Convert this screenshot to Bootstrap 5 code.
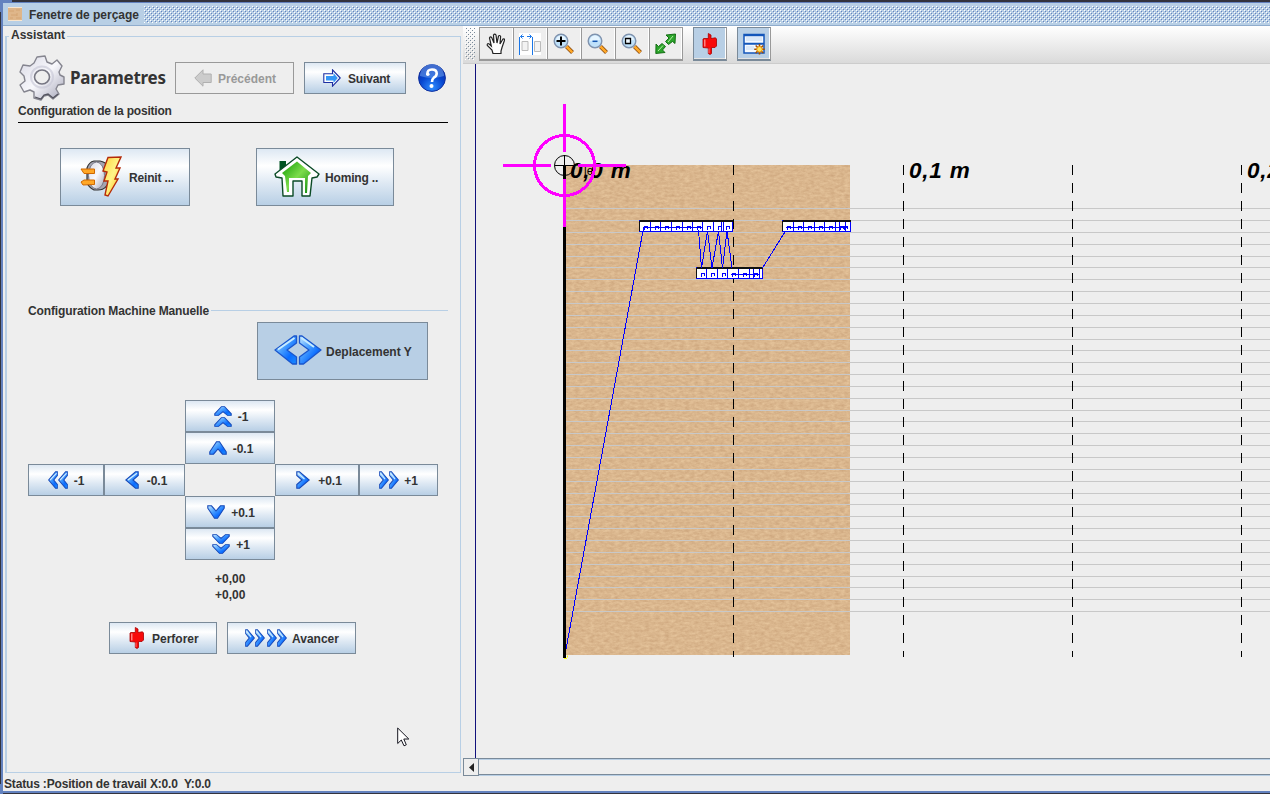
<!DOCTYPE html>
<html lang="fr">
<head>
<meta charset="utf-8">
<title>Fenetre de perçage</title>
<link href="https://cdn.jsdelivr.net/npm/bootstrap@5.3.0/dist/css/bootstrap.min.css" rel="stylesheet">
<style>
body{font:bold 12px/14px "Liberation Sans",sans-serif;color:#333;background:#eee;width:1270px;height:794px;overflow:hidden}
.frame{height:794px;border-top:2px solid #33333d;border-bottom:1px solid #33333d;border-left:1px solid #33333d}
.inner-frame{border-left:2px solid #6382bf;border-top:1px solid #6382bf;border-bottom:2px solid #6382bf;background:#eee}
.titlebar{height:23px;background:#b8cfe5;border-bottom:1px solid #8faccd;padding-left:5px}
.bumps{height:17px;margin-left:5px}
.tool-head{height:38px;background:linear-gradient(#fff,#ddd 92%,#dadada);border-bottom:1px solid #ccc;padding:1px 0 0 2px}
.left-pane{width:460px}
.group-box{border:1px solid #b8cfe5;border-left-width:2px;margin:10px 2px 3px 2px;height:737px}
.group-name{margin-top:-9px;padding:0 2px;margin-left:2px;background:#eee;width:max-content}
.snug{letter-spacing:-.17px}
.jbtn{border:1px solid #7a8a99;border-radius:0;background:linear-gradient(#dde8f3 0%,#fff 30%,#dde8f3 62%,#b8cfe5 100%);font:bold 12px/14px "Liberation Sans",sans-serif;color:#333;padding:2px 0 0}
.jbtn>svg{margin-top:-2px}
.jbtn:disabled{background:#eee;border-color:#999;color:#999;opacity:1}
.jbtn.pressed{background:#b8cfe5}
.tbtn{width:34px;height:34px;border:1px solid #999;border-width:1px 0 2px 1px;box-shadow:inset -1px 0 #fff,inset 0 -1px #e4e4e4;background:#eee;border-radius:0;padding:0 1px 0 0}
.tbtn.on{background:#b8cfe5;border-color:#7a8a99}
.tbtn:last-child{border-right:1px solid #999}
.heading{font:bold 17px/22px "Noto Sans","Open Sans",sans-serif;letter-spacing:-.25px}
.pad-grid{display:grid;grid-template-columns:76px 81px 90px 84px 79px;grid-auto-rows:32px;margin:20px 0 0 21px}
.canvas-pane{border-left:1px solid #11117c;margin-left:12px}
.scroll-row{height:18px;border-top:1px solid #7a8a99}
.scroll-arrow{width:16px;border:1px solid #7a8a99;border-top:0;background:#eee}
.scroll-track{border-top:1px solid #b8cfe5;border-bottom:1px solid #7a8a99;height:16px;box-shadow:0 1px #b8cfe5}
.pointer{left:397px;top:727px}
.corner{left:0;top:0;width:12px;height:3px;background:#6382bf}
.corner.side{width:3px;height:12px}
.corner.low{top:784px;width:3px;height:10px}
svg{display:block;flex:none}
</style>
</head>
<body>
<svg width="0" height="0" class="position-absolute">
<defs>
<linearGradient id="blueG" x1="0" y1="0" x2="1" y2="1"><stop offset="0" stop-color="#c4e8ff"/><stop offset=".4" stop-color="#4aa0ff"/><stop offset=".7" stop-color="#0a6cff"/><stop offset="1" stop-color="#1c8cff"/></linearGradient>
<linearGradient id="greyG" x1="0" y1="0" x2="1" y2="1"><stop offset="0" stop-color="#d8d8e4"/><stop offset=".5" stop-color="#f8f8fc"/><stop offset="1" stop-color="#a5a5b8"/></linearGradient>
<linearGradient id="yel" x1="0" y1="0" x2="1" y2="1"><stop offset="0" stop-color="#ffd23c"/><stop offset=".5" stop-color="#fff58a"/><stop offset="1" stop-color="#ffb300"/></linearGradient>
<linearGradient id="grn" x1="0" y1="0" x2="1" y2="1"><stop offset="0" stop-color="#0d9a00"/><stop offset=".5" stop-color="#7ddc4b"/><stop offset="1" stop-color="#0d8a0d"/></linearGradient>
<radialGradient id="helpG" cx=".5" cy=".85" r=".8"><stop offset="0" stop-color="#2e8dff"/><stop offset=".55" stop-color="#0747d0"/><stop offset="1" stop-color="#0a2ca8"/></radialGradient>
<symbol id="chevR" viewBox="0 0 14 18" preserveAspectRatio="none"><path d="M.8.8 3.5.8 13.2 9 3.5 17.2.8 17.2.8 13.5 6 9 .8 4.500Z" fill="url(#blueG)" stroke="#1749b8" stroke-width="1.1"/><path d="M2 2.2 8.5 8" stroke="#d5efff" stroke-width="1.2"/></symbol>
<symbol id="chevL" viewBox="0 0 14 18" preserveAspectRatio="none"><path d="M13.2.8 10.5.8.8 9 10.5 17.2 13.2 17.2 13.2 13.5 8 9 13.2 4.500Z" fill="url(#blueG)" stroke="#1749b8" stroke-width="1.1"/><path d="M12 2.2 3 9" stroke="#d5efff" stroke-width="1.2"/></symbol>
<symbol id="chevU" viewBox="0 0 18 14" preserveAspectRatio="none"><path d="M.8 13.2.8 10.8 7.5.8 10.5.8 17.2 10.8 17.2 13.2 13.5 13.2 9 8 4.5 13.2Z" fill="url(#blueG)" stroke="#1749b8" stroke-width="1.1"/></symbol>
<symbol id="chevD" viewBox="0 0 18 14" preserveAspectRatio="none"><path d="M.8.8 4.5.8 9 6 13.5.8 17.2.8 17.2 3.2 10.5 13.2 7.5 13.2.8 3.2Z" fill="url(#blueG)" stroke="#1749b8" stroke-width="1.1"/></symbol>
<symbol id="punch" viewBox="0 0 16 22"><path d="M6.300.5 9 2V5.500L13.500 4.800 14.500 6V13L13 14.500H9.500V20.500L8 21.500 6.300 20.500V15L1 14.500V6L2 5.500H6.300Z" fill="#f80a0a" stroke="#a80000" stroke-width=".8"/><path d="M2 6.500H3.500V13.500H2Z" fill="#ff8080"/><path d="M7 15.500V20" stroke="#ff7070"/></symbol>
<symbol id="loupe" viewBox="0 0 22 22"><path d="M13.5 13.5 19.5 19.5" stroke="#8a4a10" stroke-width="4"/><path d="M13.5 13.5 19.3 19.3" stroke="#ffa928" stroke-width="2.5"/><circle cx="8" cy="8" r="6.8" fill="#bfe1fa" stroke="#8093ae" stroke-width="1.4"/><path d="M3 8A5 5 0 0 1 13 7" fill="#e6f5ff"/></symbol>
<pattern id="titleBumps" width="4" height="4" patternUnits="userSpaceOnUse"><path d="M0 0h1v1H0zM2 2h1v1H2z" fill="#fff"/><path d="M1 1h1v1H1zM3 3h1v1H3z" fill="#6382bf"/></pattern>
<pattern id="gripBumps" width="4" height="4" patternUnits="userSpaceOnUse"><path d="M0 0h1v1H0zM2 2h1v1H2z" fill="#fff"/><path d="M1 1h1v1H1zM3 3h1v1H3z" fill="#7a8a99"/></pattern>
</defs>
</svg>

<div class="frame d-flex flex-column">
<div class="inner-frame d-flex flex-column flex-grow-1">
  <header class="titlebar d-flex align-items-center">
    <svg width="14" height="14"><path fill="#dfb68a" d="M0 0h14v14H0z"/><path d="M0 .5H14M0 13.5H14" stroke="#f8e6d0"/><path d="M1 4H6M8 3H12M3 8H9M9 6v3M2 11H5M8 11H13" stroke="#cc9965" opacity=".6"/></svg>
    <span style="margin-left:7px;padding-top:1px">Fenetre de perçage</span>
    <svg class="bumps flex-grow-1"><rect width="1200" height="17" fill="url(#titleBumps)"/></svg>
  </header>

  <main class="d-flex" style="height:750px">
    <section class="left-pane flex-shrink-0">
      <div class="group-box">
        <div class="group-name">Assistant</div>
        <div class="d-flex align-items-center" style="height:46px;margin:13px 0 0 12px">
          <svg width="46" height="46" viewBox="0 0 46 46"><path d="M18 2 26 1 28 7 33 9 38 5 43 11 40 17 41 20 45 22 45 29 39 30 37 34 40 39 34 44 29 40 25 41 22 45 15 43 15 37 11 35 5 37 1 30 6 26 5 21 1 17 4 10 11 11 15 8Z" fill="url(#greyG)" stroke="#85858f" stroke-width="1.4" stroke-linejoin="round"/><path d="M16 42 22 44 25 40 29 39 34 43 39 39" fill="none" stroke="#555560" stroke-width="1.3"/><ellipse cx="23" cy="22" rx="7.5" ry="7" fill="#eee" stroke="#777783" stroke-width="1.6"/><ellipse cx="23" cy="22" rx="11" ry="10.5" fill="none" stroke="#c4c4d4" stroke-width="2" opacity=".6"/></svg>
          <span class="heading" style="width:105px;margin-left:5px">Parametres</span>
          <button class="btn jbtn d-flex align-items-center" disabled style="width:119px;height:32px;padding-left:18px"><svg width="18" height="18" viewBox="0 0 18 18" style="margin-right:6px"><path d="M.8 9 9 .8V5H17.2V13.5H9V17.2Z" fill="#ccc" stroke="#b0b0b0"/></svg>Précédent</button>
          <button class="btn jbtn d-flex align-items-center" style="width:102px;height:32px;margin-left:10px;padding-left:18px"><svg width="18" height="18" viewBox="0 0 18 18" style="margin-right:7px"><path d="M17.2 9 9.5.8V4.8H.8V13.5H9.5V17.2Z" fill="#fff" stroke="#1e2fa2" stroke-width="1.1"/><path d="M14.8 9 10.500 4V7H3V11.5H10.500V14Z" fill="#3597f5"/></svg><span class="snug">Suivant</span></button>
          <svg width="28" height="28" viewBox="0 0 28 28" style="margin-left:12px"><circle cx="14" cy="14" r="13.4" fill="url(#helpG)" stroke="#12309d"/><path d="M2 12A12 12 0 0 1 26 12Q14 16 2 12Z" fill="#6ea2ef" opacity=".55"/><path d="M9.5 10Q9 5.5 14 5.5Q18.7 5.5 18.7 9.5Q18.7 12 15.8 13.7Q14 15 14 18" fill="none" stroke="#fff" stroke-width="2.6"/><circle cx="9.8" cy="10.2" r="1.8" fill="#fff"/><circle cx="13.5" cy="22" r="2" fill="#fff"/></svg>
        </div>
        <div style="margin:3px 12px 0 11px;border-bottom:1px solid #000;height:19px"><span style="letter-spacing:-.2px">Configuration de la position</span></div>
        <div class="d-flex" style="margin:25px 0 0 53px;gap:66px">
          <button class="btn jbtn d-flex align-items-center" style="width:130px;height:58px;padding-left:19px"><svg width="42" height="42" viewBox="0 0 42 42" style="margin-right:7px"><path d="M14 5H20Q31 7 30 21Q28 34 18 34H14Q8 31 7 26V12Q9 6 14 5Z" fill="#a4a4b2" stroke="#333" stroke-width="1.2"/><ellipse cx="16.5" cy="19.500" rx="8" ry="13.500" fill="url(#greyG)" stroke="#777785"/><path d="M1 13H14.500V17.500H4ZM1 26 4 24H14.500V28.500L3 29Z" fill="#ffa726" stroke="#d06800"/><path d="M28 1.5 41 1 36 12H40L35 23H38L28 40 25 39 28 25 24 25 27 16 23 15Z" fill="url(#yel)" stroke="#b52b08" stroke-width="1.4"/></svg><span class="snug">Reinit ...</span></button>
          <button class="btn jbtn d-flex align-items-center" style="width:138px;height:58px;padding-left:17px"><svg width="46" height="42" viewBox="0 0 46 42" style="margin-right:5px"><path d="M5.5 5H12V14L5.5 19Z" fill="#005322"/><path d="M23 1 45 18 43 21 38 22 36 40H28V25H19V40H9L8 22 2 21 1 18Z" fill="#fff" stroke="#0b4b26" stroke-width="1.4" stroke-linejoin="round"/><path d="M23 5.5 37 17 34 20 33 37H31V22H15V36H13L11 20 8 17Z" fill="url(#grn)"/></svg><span class="snug">Homing ..</span></button>
        </div>
        <div class="d-flex align-items-center" style="margin:97px 12px 0 21px;height:14px"><span style="letter-spacing:-.12px;padding-top:1px">Configuration Machine Manuelle</span><div class="flex-grow-1" style="height:1px;background:#b8cfe5;margin-left:2px"></div></div>
        <button class="btn jbtn pressed d-flex align-items-center" style="width:171px;height:58px;margin:5px 0 0 250px;padding-left:16px"><svg width="48" height="30" viewBox="0 0 48 30" style="margin:-5px 4px 0 0"><g fill="url(#blueG)" stroke="#1a56cc" stroke-width="1.3" stroke-linejoin="round"><path d="M20 1H22.5V8L13 15 22.5 22V29H18.5L1 15Z"/><path d="M28 1H25.5V8L35 15 25.5 22V29H29.5L47 15Z"/></g><path d="M20.500 3 4 14.500M27.500 3 40 12" stroke="#c6ebff" stroke-width="2"/></svg>Deplacement Y</button>
        <div class="pad-grid">
          <button class="btn jbtn d-flex align-items-center justify-content-center" style="grid-area:1/3"><span style="margin:-2px 0 0 2px"><svg width="18" height="10"><use href="#chevU" width="18" height="10"/></svg><svg width="18" height="10" style="margin-top:1px"><use href="#chevU" width="18" height="10"/></svg></span><span style="margin-left:6px">-1</span></button>
          <button class="btn jbtn d-flex align-items-center justify-content-center" style="grid-area:2/3;padding-left:2px"><svg width="18" height="14"><use href="#chevU"/></svg><span style="margin-left:6px">-0.1</span></button>
          <button class="btn jbtn d-flex align-items-center justify-content-center" style="grid-area:3/1"><svg width="10" height="18"><use href="#chevL" width="10" height="18"/></svg><svg width="10" height="18"><use href="#chevL" width="10" height="18"/></svg><span style="margin-left:6px">-1</span></button>
          <button class="btn jbtn d-flex align-items-center justify-content-center" style="grid-area:3/2;padding-left:3px"><svg width="14" height="18"><use href="#chevL"/></svg><span class="ms-2">-0.1</span></button>
          <button class="btn jbtn d-flex align-items-center justify-content-center" style="grid-area:3/4;padding-left:4px"><svg width="14" height="18"><use href="#chevR"/></svg><span class="ms-2">+0.1</span></button>
          <button class="btn jbtn d-flex align-items-center justify-content-center" style="grid-area:3/5"><svg width="10" height="18"><use href="#chevR" width="10" height="18"/></svg><svg width="10" height="18"><use href="#chevR" width="10" height="18"/></svg><span style="margin-left:5px">+1</span></button>
          <button class="btn jbtn d-flex align-items-center justify-content-center" style="grid-area:4/3;padding-left:2px"><svg width="18" height="14"><use href="#chevD"/></svg><span style="margin-left:6px">+0.1</span></button>
          <button class="btn jbtn d-flex align-items-center justify-content-center" style="grid-area:5/3;padding-left:2px"><span style="margin-top:-2px"><svg width="18" height="10"><use href="#chevD" width="18" height="10"/></svg><svg width="18" height="10"><use href="#chevD" width="18" height="10"/></svg></span><span style="margin-left:6px">+1</span></button>
        </div>
        <div style="margin:11px 0 0 208px;line-height:16px">+0,00<br>+0,00</div>
        <div class="d-flex" style="gap:10px;margin:19px 0 0 102px">
          <button class="btn jbtn d-flex align-items-center" style="width:108px;height:32px;padding-left:19px"><svg width="16" height="22" style="margin-right:7px"><use href="#punch"/></svg>Perforer</button>
          <button class="btn jbtn d-flex align-items-center" style="width:129px;height:32px;padding-left:17px"><svg width="42" height="18" style="margin-right:5px"><use href="#chevR" width="10" height="18"/><use href="#chevR" x="10" width="10" height="18"/><use href="#chevR" x="22" width="10" height="18"/><use href="#chevR" x="32" width="10" height="18"/></svg>Avancer</button>
        </div>
      </div>
    </section>

    <section class="flex-grow-1 d-flex flex-column overflow-hidden">
      <div class="tool-head d-flex">
        <svg width="10" height="33" style="margin-right:4px"><rect width="10" height="33" fill="url(#gripBumps)"/></svg>
        <div class="d-flex">
          <button class="btn tbtn d-flex align-items-center justify-content-center"><svg width="20" height="22" viewBox="0 0 20 22"><path d="M7 20.5 6 17 1.3 12.5Q.8 10 3.2 11L5.3 13 3.5 5Q4.2 3 5.7 4.5L8 10 7.5 2Q8.6.2 10 2L11 10 12.5 3Q14 1.8 14.6 3.5L14 11 17 6Q18.8 5.3 18.4 7.5L16 14.5 15 18V20.5Z" fill="#fff" stroke="#222" stroke-width="1.2"/></svg></button>
          <button class="btn tbtn d-flex align-items-center justify-content-center"><svg width="22" height="22" viewBox="0 0 22 22"><path fill="#fff" d="M0 0h22v22H0z"/><path d="M.5 4V22M13.5 4V22" stroke="#1976e8"/><path d="M1.5 3.5H5M8 3.5H12.5M3.5 1.5 1.5 3.5 3.5 5.5M10.5 1.5 12.5 3.5 10.5 5.5" stroke="#1976e8" fill="none"/><path d="M3 8.5H9V17.5H3ZM15.5 8.5H21.5V18.5H15.5Z" fill="#f3f3f3" stroke="#bbb"/></svg></button>
          <button class="btn tbtn d-flex align-items-center justify-content-center"><svg width="22" height="22"><use href="#loupe"/><path d="M3.5 8H12.5M8 3.5V12.5" stroke="#000" stroke-width="2"/></svg></button>
          <button class="btn tbtn d-flex align-items-center justify-content-center"><svg width="22" height="22"><use href="#loupe"/><path d="M5.5 8.3H10.5" stroke="#1455b0" stroke-width="1.5"/></svg></button>
          <button class="btn tbtn d-flex align-items-center justify-content-center"><svg width="22" height="22"><use href="#loupe"/><path d="M4.5 5.5H9.5V10.5H4.5Z" fill="#eef8ff" stroke="#000" stroke-width="1.3"/></svg></button>
          <button class="btn tbtn d-flex align-items-center justify-content-center"><svg width="22" height="22" viewBox="0 0 22 22"><g fill="#2ca52c" stroke="#0a650a" stroke-width=".9"><path d="M11 2 20.5 1 20 10.5 17.5 8.5 13.5 11.500 10.5 8.5 14 5Z"/><path d="M1 11 3.5 13.5 7 10.500 10.5 13.5 7.5 17 10 19.5.8 20.5Z"/></g><path d="M13 9 18 3M3 18 8 12.5" stroke="#b6f0a0"/></svg></button>
        </div>
        <div class="d-flex" style="margin-left:10px"><button class="btn tbtn on d-flex align-items-center justify-content-center"><svg width="16" height="22"><use href="#punch"/></svg></button></div>
        <div class="d-flex" style="margin-left:10px"><button class="btn tbtn on d-flex align-items-center justify-content-center"><svg width="22" height="22" viewBox="0 0 22 22"><path d="M1 1.5H21V20H1Z" fill="#f4f9ff" stroke="#1457ba" stroke-width="1.5"/><path d="M1 2.3H21M1 10.8H21" stroke="#1457ba" stroke-width="2"/><path d="M3 6H19M3 15H11" stroke="#dce9f8" stroke-width="4"/><path d="M16.5 11V21.5M11.2 16.3H21.8M12.7 12.5 20.2 20M20.2 12.5 12.7 20" stroke="#a05008" stroke-width="1.6"/><circle cx="16.5" cy="16.3" r="2.8" fill="#ffe35c" stroke="#e68a00"/></svg></button></div>
      </div>
      <div class="canvas-pane flex-grow-1">
        <svg width="794" height="694" viewBox="476 64 794 694">
          <defs>
            <filter id="kraft" x="0" y="0" width="100%" height="100%" color-interpolation-filters="sRGB"><feTurbulence type="fractalNoise" baseFrequency=".2 .4" numOctaves="4" seed="8" result="n"/><feColorMatrix values=".12 0 0 0 .795  .15 0 0 0 .64  .15 0 0 0 .48  0 0 0 0 1"/></filter>
          </defs>
          <rect x="565" y="165" width="285" height="490" fill="#d9b68c"/>
          <rect x="565" y="165" width="285" height="490" filter="url(#kraft)"/>
          <g id="tracks" stroke="#c8c8c8"></g>
          <g stroke="#000" stroke-dasharray="10 8"><path d="M733.5 165V657M903.5 165V657M1072.5 165V657M1241.5 165V657"/></g>
          <g id="punches" shape-rendering="crispEdges"></g>
          <path d="M565.5 652 643.5 228M698.5 230 701.5 268 707.5 231 712 268 718.5 231 722.5 268 727 231 732 268M762.5 268 785.5 231" fill="none" stroke="#00f" shape-rendering="crispEdges"/>
          <path d="M564.5 165V658" stroke="#000" stroke-width="3"/>
          <path d="M564 658.5h3M567.5 655.5v2" stroke="#ff0"/>
          <g font-family="Liberation Sans, sans-serif" font-weight="bold" font-style="italic" font-size="22.5" letter-spacing=".8" fill="#000">
            <text x="570" y="178">0,0 m</text><text x="909" y="178">0,1 m</text><text x="1247" y="178">0,2 m</text>
          </g>
          <text x="584" y="175" font-family="Liberation Sans, sans-serif" font-weight="normal" font-size="12" fill="#000">le</text>
          <g stroke="#f0f" stroke-width="3" fill="none" shape-rendering="crispEdges"><circle cx="564.5" cy="165.500" r="30"/><path d="M564.5 104V152M564.5 179V227M503 165.500H551M578 165.500H626"/></g>
          <g stroke="#000" fill="none"><circle cx="564.5" cy="165.500" r="10"/><path d="M554.5 165.500H574.5M564.5 155V176"/></g>
        </svg>
      </div>
      <div class="scroll-row d-flex"><div class="scroll-arrow d-flex align-items-center justify-content-center"><svg width="5" height="9"><path d="M5 0V9L0 4.500Z" fill="#222"/></svg></div><div class="scroll-track flex-grow-1"></div></div>
    </section>
  </main>
  <footer class="snug" style="white-space:pre;margin-left:1px;line-height:17px;height:15px">Status :Position de travail X:0.0  Y:0.0</footer>
</div>
</div>
<div class="corner position-absolute"></div><div class="corner side position-absolute"></div><div class="corner low position-absolute"></div>
<svg class="pointer position-absolute" width="13" height="20" viewBox="0 0 13 20"><path d="M.7 1V16.500L4.300 13 7 18.800 9.300 17.800 6.800 12H11.800Z" fill="#fff" stroke="#15151f" stroke-width="1"/></svg>
<script src="https://cdn.jsdelivr.net/npm/bootstrap@5.3.0/dist/js/bootstrap.bundle.min.js"></script>
<script>
// Track lines of the punched book
let lines = '';
for (let n = 0; n < 35; n++) lines += `<path d="M566 ${Math.floor(208.65 + 11.85 * n) + .5}H1270"/>`;
document.getElementById('tracks').innerHTML = lines;
// Punch rows: left, right, top, separators, centre line span
const rows = [
  [639, 732, 220, [650, 660, 671, 682, 692, 702, 713, 721, 723], [643, 702]],
  [696, 762, 267, [706, 717, 727, 738, 749, 753, 759], [731, 760]],
  [782, 850, 220, [793, 803, 814, 824, 835, 839, 845], [786, 847]]
];
let out = '';
for (const [l, r, t, seps, mid] of rows) {
  out += `<rect x="${l + .5}" y="${t + .5}" width="${r - l}" height="11" fill="#fff" stroke="#00f"/>`;
  out += `<path d="M${mid[0]} ${t + 7.5}H${mid[1]}" stroke="#00f"/>`;
  out += seps.map(s => `<path d="M${s + .5} ${t + 1}V${t + 11}" stroke="#00f"/>`).join('');
  out += [l, ...seps].filter(s => s + 9 < r).map(s => `<path d="M${s + 5.5} ${t + 10}V${t + 6.5}H${s + 8.5}V${t + 8.5}" stroke="#00f" fill="none"/>`).join('');
  out += `<path d="M${l + 1} ${t + .5}H${r + 1}" stroke="#111" stroke-width="2"/><path d="M${l + .5} ${t + 1}V${t + 11}" stroke="#111"/>`;
}
document.getElementById('punches').innerHTML = out;
</script>
</body>
</html>
